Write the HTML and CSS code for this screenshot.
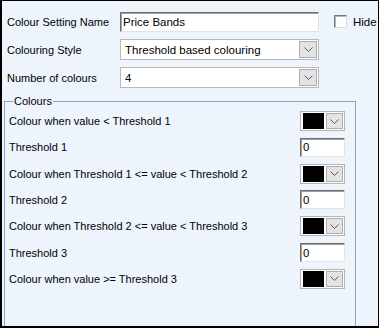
FILE: index.html
```html
<!DOCTYPE html>
<html lang="en">
<head>
    <meta charset="UTF-8">
    <title>Colour Setting</title>
    <link rel="stylesheet" href="styles.css">
</head>
<body>
    <div class="window">
        <div class="top">
            <label class="label">Colour Setting Name</label>
            <input class="text-box" type="text" value="Price Bands">
            <div class="hide">
                <span class="check"></span>
                <span>Hide</span>
            </div>

            <label class="label">Colouring Style</label>
            <div class="combo">
                <span class="combo-text">Threshold based colouring</span>
                <span class="drop-btn">
                    <svg width="9" height="5" viewBox="0 0 9 5"><polyline points="0.5,0.5 4.5,4.5 8.5,0.5" fill="none" stroke="#5a5a5a" stroke-width="1"/></svg>
                </span>
            </div>
            <div></div>

            <label class="label">Number of colours</label>
            <div class="combo">
                <span class="combo-text">4</span>
                <span class="drop-btn">
                    <svg width="9" height="5" viewBox="0 0 9 5"><polyline points="0.5,0.5 4.5,4.5 8.5,0.5" fill="none" stroke="#5a5a5a" stroke-width="1"/></svg>
                </span>
            </div>
            <div></div>
        </div>

        <fieldset class="colours">
            <legend>Colours</legend>
            <div class="rows" id="rows"></div>
        </fieldset>
    </div>
    <script>
        const linhas = [
            ["Colour when value < Threshold 1", "cor"],
            ["Threshold 1", "num"],
            ["Colour when Threshold 1 <= value < Threshold 2", "cor"],
            ["Threshold 2", "num"],
            ["Colour when Threshold 2 <= value < Threshold 3", "cor"],
            ["Threshold 3", "num"],
            ["Colour when value >= Threshold 3", "cor"]
        ];

        function carregarLinhas() {
            const rows = document.getElementById("rows");
            linhas.forEach(([texto, tipo]) => {
                const label = document.createElement("span");
                label.className = "label";
                label.textContent = texto;
                rows.appendChild(label);

                const ctrl = document.createElement("div");
                if (tipo === "cor") {
                    ctrl.className = "colour-pick";
                    ctrl.innerHTML = `
                        <span class="swatch"></span>
                        <span class="drop-btn small">
                            <svg width="9" height="5" viewBox="0 0 9 5"><polyline points="0.5,0.5 4.5,4.5 8.5,0.5" fill="none" stroke="#5a5a5a" stroke-width="1"/></svg>
                        </span>`;
                } else {
                    ctrl.className = "num-wrap";
                    ctrl.innerHTML = `<input class="text-box num" type="text" value="0">`;
                }
                rows.appendChild(ctrl);
            });
        }

        carregarLinhas();
    </script>
</body>
</html>
```

FILE: styles.css
```css
body {
    margin: 0;
    font-family: "Liberation Sans", Arial, sans-serif;
    font-size: 11px;
    color: #000;
}
.window {
    width: 379px;
    height: 328px;
    box-sizing: border-box;
    border: 1px solid #000;
    border-left-width: 2px;
    border-bottom-width: 2px;
    background-color: #eef4fc;
    overflow: hidden;
}
.top {
    display: grid;
    grid-template-columns: 113px 199px auto;
    grid-auto-rows: 21px;
    row-gap: 7px;
    align-items: center;
    padding: 10px 0 0 5px;
}
.label {
    white-space: nowrap;
}
.text-box {
    box-sizing: border-box;
    height: 20px;
    margin: 0;
    padding: 0 2px;
    font: inherit;
    background: #fff;
    border: 1px solid;
    border-color: #6d6d6d #e3e3e3 #e3e3e3 #6d6d6d;
    box-shadow: inset 1px 1px 0 #a0a0a0;
    outline: none;
}
.top .text-box {
    width: 199px;
    align-self: start;
    margin-top: 1px;
    font-size: 11.5px;
}
.hide {
    display: flex;
    align-items: center;
    gap: 6px;
    margin-left: 15px;
    font-size: 11.5px;
}
.check {
    width: 13px;
    height: 13px;
    box-sizing: border-box;
    background: #fff;
    border: 1px solid;
    border-color: #7a7a7a #dcdcdc #dcdcdc #7a7a7a;
    box-shadow: inset 1px 1px 0 #b5b5b5;
}
.combo {
    display: flex;
    align-items: center;
    height: 21px;
    box-sizing: border-box;
    background: #fff;
    border: 1px solid #b9b9b9;
    padding: 1px;
    font-size: 11.5px;
}
.combo-text {
    flex: 1;
    padding-left: 3px;
}
.drop-btn {
    display: flex;
    align-items: center;
    justify-content: center;
    width: 18px;
    height: 17px;
    box-sizing: border-box;
    background: #e3e3e3;
    border: 1px solid #acacac;
}
.colours {
    width: 352px;
    box-sizing: border-box;
    margin: 7px 0 0 2px;
    padding: 4px 10px 60px 4px;
    border: 1px solid #8ea6c6;
    min-width: 0;
}
.colours legend {
    padding: 0 1px;
    margin-left: 4px;
}
.rows {
    display: grid;
    grid-template-columns: 1fr 45px;
    grid-auto-rows: 20px;
    row-gap: 6.33px;
    align-items: center;
}
.colour-pick {
    display: flex;
    align-items: center;
    gap: 2px;
    height: 20px;
    box-sizing: border-box;
    padding: 1px 1px 1px 2px;
    background: #fff;
    border: 1px solid #b4b4b4;
}
.swatch {
    width: 22px;
    height: 16px;
    background: #000;
}
.drop-btn.small {
    width: 17px;
    height: 16px;
}
.num-wrap {
    display: flex;
}
.text-box.num {
    width: 45px;
    height: 19px;
    padding-left: 2px;
    font-size: 11.5px;
}
```
